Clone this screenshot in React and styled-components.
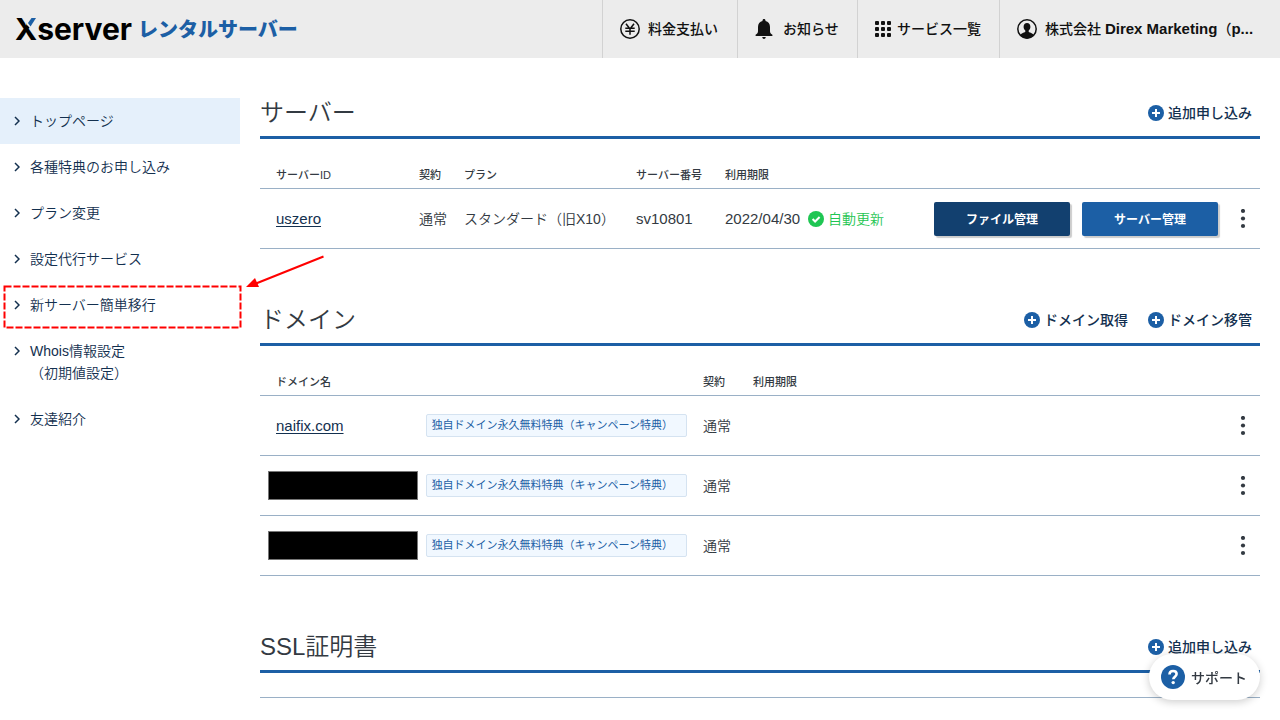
import React from "react";
import styled, { createGlobalStyle } from "styled-components";

const colors = {
  blue: "#1c5fa5",
  navy: "#12406f",
  link: "#13304f",
  text: "#333a42",
  line: "#9ab0c6",
  green: "#1fc653",
  red: "#ff0000",
};

const GlobalStyle = createGlobalStyle`
  * {
    box-sizing: border-box;
  }
  body {
    margin: 0;
    background: #fff;
    color: ${colors.text};
    font-family: "Liberation Sans", "Noto Sans CJK JP", sans-serif;
    font-size: 14px;
    font-weight: 350;
    line-height: 22px;
  }
  a {
    color: inherit;
    text-decoration: none;
  }
  button {
    font-family: inherit;
    cursor: pointer;
  }
  svg {
    display: block;
    flex: none;
  }
`;

const Header = styled.header`
  display: flex;
  justify-content: space-between;
  height: 58px;
  background: #ececec;
  color: #111;
`;

const Logo = styled.a`
  display: flex;
  align-items: center;
  gap: 6px;
  padding-left: 15px;
  white-space: nowrap;
`;

const LogoName = styled.span`
  position: relative;
  color: #000;
  font-family: Inter, sans-serif;
  font-size: 30px;
  font-weight: 700;
`;

const LogoAccent = styled.svg`
  position: absolute;
  top: 0;
  left: 12px;
`;

const LogoSub = styled.span`
  color: ${colors.blue};
  font-family: "Noto Sans CJK JP", sans-serif;
  font-size: 20px;
  font-weight: 900;
  line-height: 24px;
`;

const HeaderNav = styled.nav`
  display: flex;
`;

const HeaderLink = styled.a`
  display: flex;
  align-items: center;
  gap: ${({ $gap }) => $gap || 8}px;
  min-width: ${({ $width }) => $width}px;
  padding: 0 15px 0 17px;
  border-left: 1px solid #d2d2d2;
  font-weight: 500;
  white-space: nowrap;
`;

const AccountName = styled.span`
  font-size: 14px;
  font-weight: 500;
  b {
    font-size: 15px;
    font-weight: 700;
  }
`;

const Body = styled.div`
  display: flex;
  align-items: flex-start;
`;

const Sidebar = styled.ul`
  flex: 0 0 240px;
  margin: 40px 0 0;
  padding: 0;
  list-style: none;
  color: ${colors.link};
`;

const SidebarItem = styled.li`
  position: relative;
`;

const SidebarLink = styled.a`
  display: flex;
  gap: 10px;
  padding: 12px 14px;
  background: ${({ $active }) => ($active ? "#e5f0fb" : "transparent")};
  white-space: pre-line;
  svg {
    margin-top: 6px;
  }
`;

const Annotation = styled.svg`
  position: absolute;
  top: -30px;
  left: 0;
  pointer-events: none;
`;

const Main = styled.main`
  flex: 1;
  min-width: 0;
  padding: 30px 20px 0;
`;

const Section = styled.section`
  & + & {
    margin-top: 46px;
  }
`;

const SectionHead = styled.div`
  display: flex;
  align-items: center;
  justify-content: space-between;
  height: 51px;
  padding: 2px 8px 0 0;
  border-bottom: 3px solid ${colors.blue};
`;

const Title = styled.h2`
  margin: 0;
  font-size: 24px;
  font-weight: 350;
  line-height: 36px;
`;

const Actions = styled.div`
  display: flex;
  gap: 20px;
`;

const ActionLink = styled.a`
  display: flex;
  align-items: center;
  gap: 4px;
  color: ${colors.link};
  font-weight: 500;
`;

const Table = styled.table`
  width: 100%;
  table-layout: fixed;
  border-collapse: separate;
  border-spacing: 0;
  text-align: left;
  white-space: nowrap;
`;

const Th = styled.th`
  width: ${({ $width }) => ($width ? `${$width}px` : "auto")};
  padding: 28px 8px 5px;
  border-bottom: 1px solid ${colors.line};
  font-size: 11px;
  font-weight: 500;
  line-height: 16px;
  &:first-child {
    padding-left: 16px;
  }
`;

const Td = styled.td`
  height: 60px;
  padding: 0 8px;
  border-bottom: 1px solid ${colors.line};
  &:first-child {
    padding-left: 16px;
  }
  &:last-child {
    padding-right: 4px;
  }
`;

const Latin = styled.span`
  font-size: 15px;
`;

const NameLink = styled.a`
  color: ${colors.link};
  font-size: 15px;
  text-decoration: underline;
  text-underline-offset: 2px;
`;

const Renewal = styled.div`
  display: flex;
  align-items: center;
  gap: 8px;
`;

const RenewalStatus = styled.span`
  display: flex;
  align-items: center;
  gap: 4px;
  color: ${colors.green};
`;

const RowControls = styled.div`
  display: flex;
  align-items: center;
  justify-content: flex-end;
  gap: 12px;
`;

const ManageButton = styled.button`
  width: 136px;
  height: 34px;
  padding: 0;
  border: 0;
  border-radius: 2px;
  background: ${({ $dark }) => ($dark ? colors.navy : colors.blue)};
  box-shadow: 2px 2px 1px #ccc;
  color: #fff;
  font-size: 12px;
  font-weight: 700;
`;

const MenuButton = styled.button`
  display: flex;
  align-items: center;
  justify-content: center;
  width: 26px;
  height: 30px;
  padding: 0;
  border: 0;
  background: none;
  color: ${colors.text};
`;

const DomainName = styled.div`
  display: flex;
  align-items: center;
`;

const DomainLabel = styled.div`
  width: 150px;
`;

const Redacted = styled.div`
  width: 150px;
  height: 29px;
  margin: 0 8px 0 -8px;
  border: 1px solid #777;
  background: #000;
`;

const Tag = styled.span`
  width: 262px;
  padding: 0 5px;
  border: 1px solid #d5e3f1;
  border-radius: 2px;
  background: #f1f8ff;
  color: ${colors.blue};
  font-size: 11px;
  font-weight: 400;
  line-height: 21px;
`;

const EmptyRow = styled.div`
  height: 25px;
  border-bottom: 1px solid ${colors.line};
`;

const SupportButton = styled.button`
  position: fixed;
  right: 20px;
  bottom: 20px;
  display: flex;
  align-items: center;
  gap: 6px;
  height: 46px;
  padding: 0 13px 0 12px;
  border: 0;
  border-radius: 23px;
  background: #fff;
  box-shadow: 0 2px 8px rgba(0, 0, 0, 0.2);
  color: ${colors.text};
  font-size: 14px;
  font-weight: 500;
`;

const YenIcon = () => (
  <svg width="20" height="20" viewBox="0 0 20 20" fill="none" stroke="currentColor" strokeWidth="1.5">
    <circle cx="10" cy="10" r="9.2" />
    <path d="M6 4.8l4 5.2 4-5.2M10 10v5.8M5.3 9.3h9.4M5.3 12.2h9.4" />
  </svg>
);

const BellIcon = () => (
  <svg width="18" height="20" viewBox="0 0 18 20" fill="currentColor">
    <path d="M9 0c.9 0 1.5.6 1.5 1.5v.6C13.3 2.8 15 5 15 8v4.2c0 1.6.8 2.6 2.4 3.6v1.2H.6v-1.2C2.2 14.8 3 13.8 3 12.2V8c0-3 1.7-5.2 4.5-5.9v-.6C7.5.6 8.1 0 9 0zM7.2 18h3.6c-.2 1.2-.9 1.9-1.8 1.9S7.4 19.2 7.2 18z" />
  </svg>
);

const GridIcon = () => (
  <svg width="16" height="16" viewBox="0 0 16 16" fill="currentColor">
    {[0, 6, 12].map(y =>
      [0, 6, 12].map(x => <rect key={`${x}-${y}`} x={x} y={y} width="4" height="4" rx="1" />)
    )}
  </svg>
);

const UserIcon = () => (
  <svg width="20" height="20" viewBox="0 0 20 20">
    <circle cx="10" cy="10" r="9.2" fill="none" stroke="currentColor" strokeWidth="1.5" />
    <path
      d="M10 4c2.1 0 3.4 1.5 3.4 3.7 0 1.7-.7 2.9-1.7 3.7v1.3c0 .6 3.9 1 5.1 3.3C15.2 18.3 12.7 19.5 10 19.5S4.8 18.3 3.2 16c1.2-2.3 5.1-2.7 5.1-3.3v-1.3c-1-.8-1.7-2-1.7-3.7C6.6 5.5 7.9 4 10 4z"
      fill="currentColor"
    />
  </svg>
);

const ChevronIcon = () => (
  <svg width="6" height="10" viewBox="0 0 6 10" fill="none" stroke="currentColor" strokeWidth="1.5">
    <path d="M1 1l4 4-4 4" />
  </svg>
);

const PlusIcon = () => (
  <svg width="16" height="16" viewBox="0 0 16 16">
    <circle cx="8" cy="8" r="8" fill={colors.blue} />
    <path d="M8 4v8M4 8h8" stroke="#fff" strokeWidth="2" />
  </svg>
);

const CheckIcon = () => (
  <svg width="16" height="16" viewBox="0 0 16 16">
    <circle cx="8" cy="8" r="8" fill={colors.green} />
    <path d="M4.6 8l2.5 2.5 4.5-4.5" fill="none" stroke="#fff" strokeWidth="2" />
  </svg>
);

const DotsIcon = () => (
  <svg width="6" height="20" viewBox="0 0 6 20" fill="currentColor">
    <circle cx="3" cy="2" r="2.1" />
    <circle cx="3" cy="9.5" r="2.1" />
    <circle cx="3" cy="17" r="2.1" />
  </svg>
);

const HelpIcon = () => (
  <svg width="24" height="24" viewBox="0 0 24 24">
    <circle cx="12" cy="12" r="12" fill={colors.blue} />
    <path
      d="M8.5 9.6c0-2.2 1.5-3.6 3.6-3.6s3.5 1.2 3.5 3c0 2.6-3.3 2.7-3.3 5.3"
      fill="none"
      stroke="#fff"
      strokeWidth="2.6"
    />
    <circle cx="12.2" cy="17.6" r="1.7" fill="#fff" />
  </svg>
);

const menuItems = [
  { label: "トップページ", active: true },
  { label: "各種特典のお申し込み" },
  { label: "プラン変更" },
  { label: "設定代行サービス" },
  { label: "新サーバー簡単移行", marked: true },
  { label: "Whois情報設定\n（初期値設定）" },
  { label: "友達紹介" },
];

const domains = [
  { id: 1, name: "naifix.com" },
  { id: 2 },
  { id: 3 },
];

function SectionHeader({ title, actions }) {
  return (
    <SectionHead>
      <Title>{title}</Title>
      <Actions>
        {actions.map(action => (
          <ActionLink href="#" key={action}>
            <PlusIcon />
            {action}
          </ActionLink>
        ))}
      </Actions>
    </SectionHead>
  );
}

function RowMenu() {
  return (
    <MenuButton type="button" aria-label="メニュー">
      <DotsIcon />
    </MenuButton>
  );
}

function App() {
  return (
    <React.Fragment>
      <GlobalStyle />
      <Header>
        <Logo href="#">
          <LogoName>
            Xserver
            <LogoAccent width="11" height="12" viewBox="0 0 11 12">
              <path d="M0 0h11v7L5 12 0 7z" fill="#ececec" />
              <path d="M4.5 0H9L3.5 8.5 1 5z" fill={colors.blue} />
            </LogoAccent>
          </LogoName>
          <LogoSub>レンタルサーバー</LogoSub>
        </Logo>
        <HeaderNav>
          <HeaderLink href="#" $width={135}>
            <YenIcon />
            料金支払い
          </HeaderLink>
          <HeaderLink href="#" $width={120} $gap={10}>
            <BellIcon />
            お知らせ
          </HeaderLink>
          <HeaderLink href="#" $width={142} $gap={6}>
            <GridIcon />
            サービス一覧
          </HeaderLink>
          <HeaderLink href="#" $width={281}>
            <UserIcon />
            <AccountName>
              株式会社 <b>Direx Marketing</b>（<b>p...</b>
            </AccountName>
          </HeaderLink>
        </HeaderNav>
      </Header>
      <Body>
        <Sidebar>
          {menuItems.map(item => (
            <SidebarItem key={item.label}>
              <SidebarLink href="#" $active={item.active}>
                <ChevronIcon />
                {item.label}
              </SidebarLink>
              {item.marked && (
                <Annotation width="330" height="80" viewBox="0 0 330 80" fill="none" stroke={colors.red}>
                  <rect x="4.5" y="34.5" width="236" height="41" strokeWidth="2" strokeDasharray="7 2" />
                  <path d="M323.5 4.5L256 31.5" strokeWidth="2" />
                  <path d="M246 35l9-9 4 9z" fill={colors.red} stroke="none" />
                </Annotation>
              )}
            </SidebarItem>
          ))}
        </Sidebar>
        <Main>
          <Section>
            <SectionHeader title="サーバー" actions={["追加申し込み"]} />
            <Table>
              <thead>
                <tr>
                  <Th $width={151}>サーバーID</Th>
                  <Th $width={45}>契約</Th>
                  <Th $width={172}>プラン</Th>
                  <Th $width={89}>サーバー番号</Th>
                  <Th $width={180}>利用期限</Th>
                  <Th />
                </tr>
              </thead>
              <tbody>
                <tr>
                  <Td>
                    <NameLink href="#">uszero</NameLink>
                  </Td>
                  <Td>通常</Td>
                  <Td>スタンダード（旧X10）</Td>
                  <Td>
                    <Latin>sv10801</Latin>
                  </Td>
                  <Td>
                    <Renewal>
                      <Latin>2022/04/30</Latin>
                      <RenewalStatus>
                        <CheckIcon />
                        自動更新
                      </RenewalStatus>
                    </Renewal>
                  </Td>
                  <Td>
                    <RowControls>
                      <ManageButton type="button" $dark>ファイル管理</ManageButton>
                      <ManageButton type="button">サーバー管理</ManageButton>
                      <RowMenu />
                    </RowControls>
                  </Td>
                </tr>
              </tbody>
            </Table>
          </Section>
          <Section>
            <SectionHeader title="ドメイン" actions={["ドメイン取得", "ドメイン移管"]} />
            <Table>
              <thead>
                <tr>
                  <Th $width={435}>ドメイン名</Th>
                  <Th $width={50}>契約</Th>
                  <Th $width={200}>利用期限</Th>
                  <Th />
                </tr>
              </thead>
              <tbody>
                {domains.map(domain => (
                  <tr key={domain.id}>
                    <Td>
                      <DomainName>
                        {domain.name ? (
                          <DomainLabel>
                            <NameLink href="#">{domain.name}</NameLink>
                          </DomainLabel>
                        ) : (
                          <Redacted />
                        )}
                        <Tag>独自ドメイン永久無料特典（キャンペーン特典）</Tag>
                      </DomainName>
                    </Td>
                    <Td>通常</Td>
                    <Td />
                    <Td>
                      <RowControls>
                        <RowMenu />
                      </RowControls>
                    </Td>
                  </tr>
                ))}
              </tbody>
            </Table>
          </Section>
          <Section>
            <SectionHeader title="SSL証明書" actions={["追加申し込み"]} />
            <EmptyRow />
          </Section>
        </Main>
      </Body>
      <SupportButton type="button">
        <HelpIcon />
        サポート
      </SupportButton>
    </React.Fragment>
  );
}

export default App;
